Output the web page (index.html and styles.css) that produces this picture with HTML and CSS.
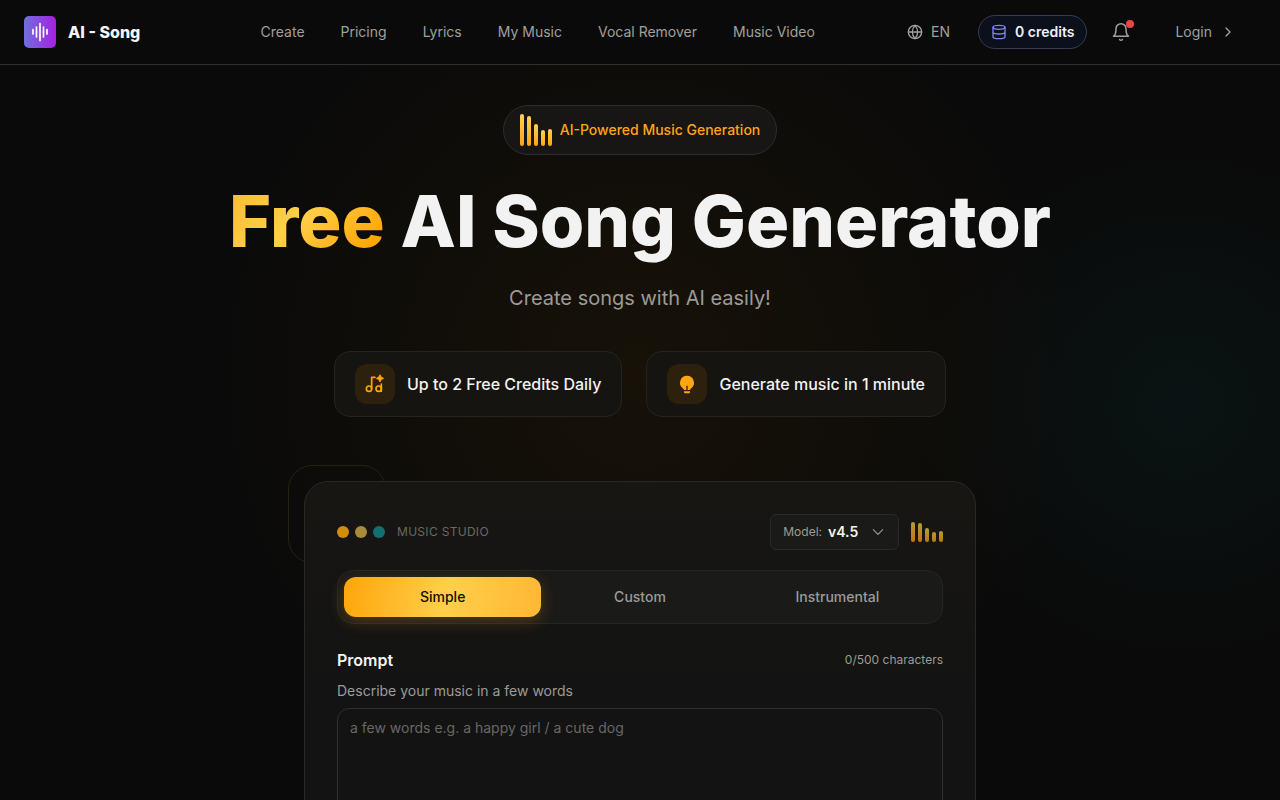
FILE: index.html
```html
<!DOCTYPE html>
<html lang="en">
<head>
<meta charset="utf-8">
<meta name="viewport" content="width=device-width, initial-scale=1">
<title>AI - Song</title>
<link rel="stylesheet" href="styles.css">
</head>
<body>
<header class="topbar">
  <a class="brand" href="#">
    <svg class="brand-mark" viewBox="0 0 32 32" aria-hidden="true">
      <defs><linearGradient id="mark" x1="0" y1="0" x2="1" y2="0"><stop offset="0" stop-color="#6f6fdc"/><stop offset="1" stop-color="#a620e2"/></linearGradient></defs>
      <rect width="32" height="32" rx="5" fill="url(#mark)"/>
      <path d="M9 13.500v4.500M12.500 11v10M16 7.500v17M19.500 11v10M23 13.500v4.500" stroke="#fff" stroke-width="1.700" stroke-linecap="round"/>
    </svg>
    <span>AI - Song</span>
  </a>
  <nav class="nav" aria-label="Main">
    <a href="#">Create</a>
    <a href="#">Pricing</a>
    <a href="#">Lyrics</a>
    <a href="#">My Music</a>
    <a href="#">Vocal Remover</a>
    <a href="#">Music Video</a>
  </nav>
  <div class="actions">
    <button class="lang" type="button">
      <svg class="icon" viewBox="0 0 24 24" aria-hidden="true"><circle cx="12" cy="12" r="10"/><path d="M2 12h20M12 2a15 15 0 0 1 4 10 15 15 0 0 1-4 10 15 15 0 0 1-4-10 15 15 0 0 1 4-10z"/></svg>
      EN
    </button>
    <button class="credits" type="button">
      <svg class="icon" viewBox="0 0 24 24" aria-hidden="true"><ellipse cx="12" cy="5" rx="9" ry="3"/><path d="M3 5v14c0 1.700 4 3 9 3s9-1.300 9-3V5M3 12c0 1.700 4 3 9 3s9-1.300 9-3"/></svg>
      0 credits
    </button>
    <button class="bell" type="button" aria-label="Notifications">
      <svg class="icon" viewBox="0 0 24 24" aria-hidden="true"><path d="M6 8a6 6 0 0 1 12 0c0 7 3 9 3 9H3s3-2 3-9M10.300 21a1.940 1.940 0 0 0 3.400 0"/></svg>
      <span class="bell-dot"></span>
    </button>
    <a class="login" href="#">Login
      <svg class="icon" viewBox="0 0 24 24" aria-hidden="true"><path d="m9 18 6-6-6-6"/></svg>
    </a>
  </div>
</header>

<main class="hero">
  <p class="badge">
    <span class="bars" aria-hidden="true"><i class="b1"></i><i class="b2"></i><i class="b3"></i><i class="b4"></i><i class="b5"></i></span>
    AI-Powered Music Generation
  </p>
  <h1 class="title"><span class="title-accent">Free</span> AI Song Generator</h1>
  <p class="subtitle">Create songs with AI easily!</p>
  <ul class="perks">
    <li class="perk">
      <span class="perk-icon">
        <svg viewBox="0 0 24 24" aria-hidden="true"><g fill="none" stroke="currentColor" stroke-width="2" stroke-linecap="round" stroke-linejoin="round"><circle cx="4.800" cy="17.600" r="3.200"/><circle cx="16.400" cy="17.600" r="3.200"/><path d="M8 17.600V4h4M19.600 12v8.800"/></g><path fill="currentColor" d="M18 .8l1.500 2.900 2.900 1.500-2.900 1.500L18 9.600l-1.500-2.900-2.900-1.500 2.900-1.500z" stroke="currentColor" stroke-linejoin="round"/></svg>
      </span>
      Up to 2 Free Credits Daily
    </li>
    <li class="perk">
      <span class="perk-icon">
        <svg viewBox="0 0 24 24" aria-hidden="true"><path fill="currentColor" d="M12 2.200a8.300 8.300 0 0 0-5.200 14.800c.8.700 1.400 1.200 1.600 2.200h2.800v-5h1.600v5h2.800c.2-1 .8-1.500 1.600-2.200A8.300 8.300 0 0 0 12 2.200zM8.400 20.600h7.200v1.200a1.300 1.300 0 0 1-1.300 1.300H9.700a1.300 1.300 0 0 1-1.300-1.300z"/></svg>
      </span>
      Generate music in 1 minute
    </li>
  </ul>

  <div class="studio-wrap">
    <section class="studio" aria-label="Music Studio">
      <div class="studio-head">
        <div class="studio-name">
          <span class="dot dot-amber"></span><span class="dot dot-gold"></span><span class="dot dot-teal"></span>
          <span class="studio-label">MUSIC STUDIO</span>
        </div>
        <div class="studio-tools">
          <div class="model">
            <label for="model">Model:</label>
            <select id="model"><option>v4.5</option></select>
            <svg class="icon" viewBox="0 0 24 24" aria-hidden="true"><path d="m5 8.500 7 7 7-7"/></svg>
          </div>
          <span class="bars bars-small" aria-hidden="true"><i class="b1"></i><i class="b2"></i><i class="b3"></i><i class="b4"></i><i class="b5"></i></span>
        </div>
      </div>
      <div class="tabs" role="tablist">
        <button class="tab tab-active" type="button" role="tab" aria-selected="true">Simple</button>
        <button class="tab" type="button" role="tab" aria-selected="false">Custom</button>
        <button class="tab" type="button" role="tab" aria-selected="false">Instrumental</button>
      </div>
      <div class="prompt-head">
        <h2>Prompt</h2>
        <span class="count">0/500 characters</span>
      </div>
      <label class="prompt-label" for="prompt">Describe your music in a few words</label>
      <textarea class="prompt" id="prompt" rows="5" maxlength="500" placeholder="a few words e.g. a happy girl / a cute dog"></textarea>
    </section>
  </div>
</main>
</body>
</html>
```
FILE: styles.css
```css
* { box-sizing: border-box; }

body {
  margin: 0;
  min-height: 100vh;
  background: #0a0a0a;
  color: #f2f2f2;
  font: 14px/20px Inter, "Liberation Sans", sans-serif;
  overflow-x: hidden;
}

a { color: inherit; text-decoration: none; }
button, select, textarea { font: inherit; color: inherit; }
button { border: 0; background: none; padding: 0; }
h1, h2, p, ul { margin: 0; padding: 0; }

.icon {
  width: 16px;
  height: 16px;
  flex: none;
  fill: none;
  stroke: currentColor;
  stroke-width: 2;
  stroke-linecap: round;
  stroke-linejoin: round;
}

.topbar {
  display: flex;
  align-items: center;
  justify-content: space-between;
  height: 65px;
  padding: 0 44px 0 24px;
  border-bottom: 1px solid #303030;
  background: #0a0a0a;
  color: #a0a09e;
}

.brand {
  display: flex;
  align-items: center;
  gap: 12px;
  color: #f5f5f5;
  font-size: 16px;
  font-weight: 800;
}
.brand-mark { width: 32px; height: 32px; }

.nav { display: flex; gap: 36px; padding-left: 28px; }

.actions { display: flex; align-items: center; }
.lang { display: flex; align-items: center; gap: 8px; margin-right: 28px; }
.credits {
  display: flex;
  align-items: center;
  gap: 8px;
  height: 34px;
  padding: 0 12px;
  border: 1px solid #3b3a52;
  border-radius: 17px;
  background: #0c101d;
  color: #eef0fa;
  font-weight: 600;
}
.credits .icon { color: #8085ea; }
.bell { position: relative; display: flex; margin: 0 44px 0 24px; }
.bell .icon { width: 20px; height: 20px; stroke-width: 1.8; }
.bell-dot {
  position: absolute;
  top: -2px;
  right: -3px;
  width: 8px;
  height: 8px;
  border-radius: 50%;
  background: #ef4444;
}
.login { display: flex; align-items: center; gap: 8px; }

.hero {
  display: flex;
  flex-direction: column;
  align-items: center;
  padding: 40px 24px 64px;
  background:
    radial-gradient(circle 260px at 1180px 340px, rgba(10, 60, 62, 0.18), transparent),
    radial-gradient(circle 440px at 50% 310px, rgba(66, 42, 0, 0.24), transparent);
}

.badge {
  display: flex;
  align-items: center;
  gap: 8px;
  height: 50px;
  padding: 0 16px;
  border: 1px solid #2d2d2b;
  border-radius: 25px;
  background: #171614;
  color: #ffa514;
  font-weight: 500;
}

.bars { display: flex; align-items: flex-end; gap: 3px; height: 32px; }
.bars i {
  width: 4px;
  border-radius: 2px;
  background: linear-gradient(#ffd24d, #ffa50f);
}
.b1 { height: 100%; }
.b2 { height: 94%; }
.b3 { height: 69%; }
.b4 { height: 50%; }
.b5 { height: 54%; }
.bars-small { height: 20px; opacity: 0.7; }

.title {
  margin-top: 28px;
  font-size: 72px;
  line-height: 76px;
  font-weight: 800;
  text-align: center;
}
.title-accent {
  background: linear-gradient(135deg, #ffb733, #ffd04a 45%, #ffa200 90%);
  background-clip: text;
  -webkit-background-clip: text;
  color: transparent;
}

.subtitle {
  margin-top: 24px;
  color: #9c9b98;
  font-size: 20px;
  line-height: 30px;
}

.perks {
  display: flex;
  flex-wrap: wrap;
  justify-content: center;
  gap: 24px;
  margin-top: 38px;
  list-style: none;
}
.perk {
  display: flex;
  align-items: center;
  gap: 12px;
  height: 66px;
  padding: 0 20px;
  border: 1px solid #25241f;
  border-radius: 16px;
  background: #151411;
  font-size: 16px;
  font-weight: 500;
}
.perk-icon {
  display: grid;
  place-items: center;
  width: 40px;
  height: 40px;
  border-radius: 12px;
  background: #2d210e;
  color: #ffa50f;
}
.perk-icon svg { width: 20px; height: 20px; }

.studio-wrap {
  position: relative;
  width: 100%;
  max-width: 672px;
  margin-top: 64px;
}
.studio-wrap::before {
  content: "";
  position: absolute;
  top: -16px;
  left: -16px;
  width: 96px;
  height: 96px;
  border: 1px solid #272112;
  border-radius: 24px;
}
.studio {
  position: relative;
  padding: 32px;
  border: 1px solid #292825;
  border-radius: 24px;
  background: linear-gradient(#171613, #131313 60%);
}
.studio-head {
  display: flex;
  align-items: center;
  justify-content: space-between;
}
.studio-name { display: flex; align-items: center; gap: 6px; }
.dot { width: 12px; height: 12px; border-radius: 50%; }
.dot-amber { background: #d28d0a; }
.dot-gold { background: #a78d3b; }
.dot-teal { background: #136f70; }
.studio-label {
  margin-left: 6px;
  color: #696966;
  font-size: 12px;
  letter-spacing: 0.3px;
}
.studio-tools { display: flex; align-items: center; gap: 12px; }

.model {
  position: relative;
  display: flex;
  align-items: center;
  gap: 6px;
  height: 36px;
  padding-left: 12px;
  border: 1px solid #292927;
  border-radius: 6px;
  background: #1a1a18;
}
.model label { color: #9c9b98; font-size: 12px; }
.model select {
  width: 70px;
  height: 34px;
  padding: 0;
  border: 0;
  appearance: none;
  background: transparent;
  font-weight: 600;
}
.model .icon {
  position: absolute;
  right: 12px;
  color: #9c9b98;
  pointer-events: none;
  stroke-width: 1.6;
}

.tabs {
  display: grid;
  grid-template-columns: repeat(3, 1fr);
  margin-top: 20px;
  padding: 6px;
  border: 1px solid #262625;
  border-radius: 16px;
  background: #1a1a18;
}
.tab {
  height: 40px;
  border-radius: 12px;
  color: #9c9b98;
  font-weight: 500;
}
.tab-active {
  background: linear-gradient(100deg, #ffa50a, #ffcf4b 52%, #ffb733);
  box-shadow: 0 4px 16px rgba(255, 165, 0, 0.25);
  color: #11100c;
}

.prompt-head {
  display: flex;
  align-items: center;
  justify-content: space-between;
  margin-top: 24px;
}
.prompt-head h2 { font-size: 16px; line-height: 24px; font-weight: 600; }
.count { color: #9c9b98; font-size: 12px; }
.prompt-label { display: block; margin-top: 9px; color: #9c9b98; }
.prompt {
  display: block;
  width: 100%;
  margin-top: 7px;
  padding: 9px 12px;
  border: 1px solid #30302f;
  border-radius: 12px;
  background: #131313;
  resize: none;
}
.prompt::placeholder { color: #686866; opacity: 1; }
```
